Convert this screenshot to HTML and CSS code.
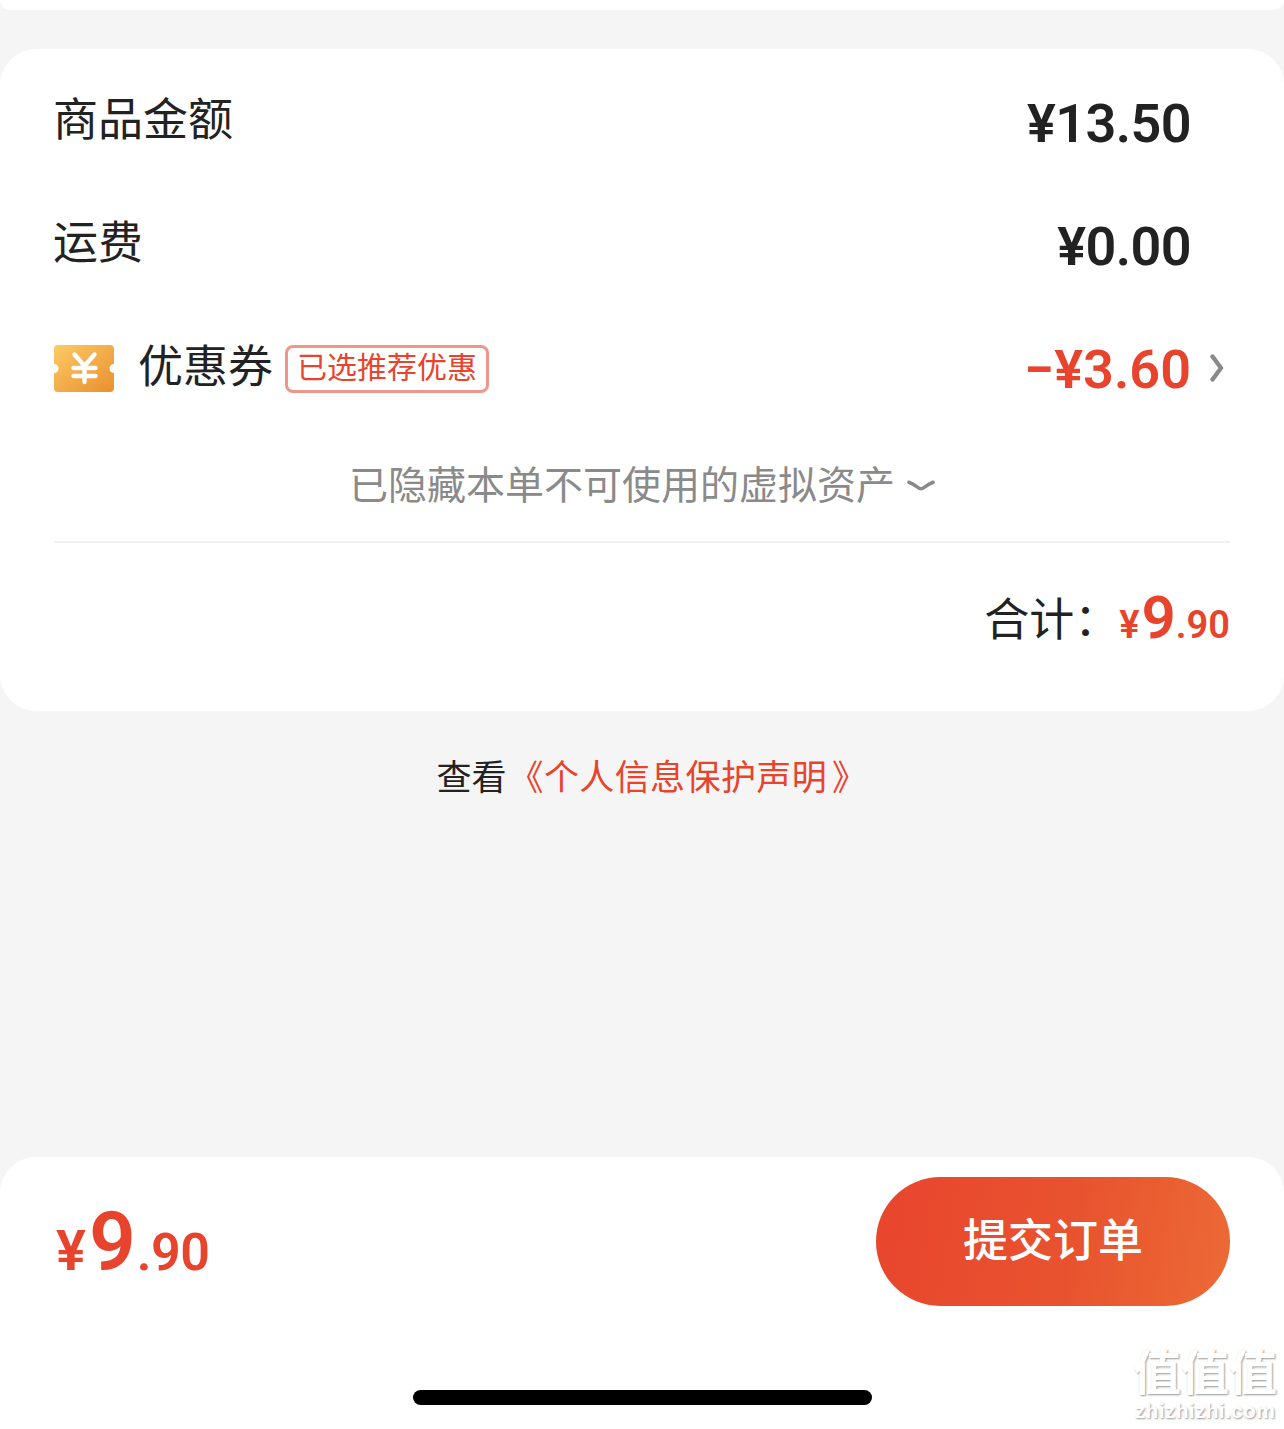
FILE: index.html
```html
<!DOCTYPE html>
<html lang="zh-CN">
<head>
<meta charset="utf-8">
<title>提交订单</title>
<link rel="stylesheet" href="styles.css">
</head>
<body>
<div class="page">
  <div class="top-card"></div>
  <section class="card">
    <div class="row">
      <span class="label">商品金额</span>
      <span class="amount">¥13.50</span>
    </div>
    <div class="row">
      <span class="label">运费</span>
      <span class="amount">¥0.00</span>
    </div>
    <div class="row row-coupon">
      <svg class="coupon" viewBox="0 0 60 47" aria-hidden="true">
        <defs>
          <linearGradient id="cg" x1="0" y1="0" x2="1" y2="1">
            <stop offset="0" stop-color="#fbcb65"/>
            <stop offset="1" stop-color="#ea8f2f"/>
          </linearGradient>
        </defs>
        <path fill="url(#cg)" d="M4 0H56a4 4 0 0 1 4 4V19a4.500 4.500 0 0 0 0 9V43a4 4 0 0 1-4 4H4a4 4 0 0 1-4-4V28a4.500 4.500 0 0 0 0-9V4a4 4 0 0 1 4-4Z"/>
        <path fill="none" stroke="#fff" stroke-width="4.400" stroke-linecap="round" d="M20.500 9.500 30.500 21 40.500 9.500M19.500 23H41.500M19.500 31H41.500M30.500 21V37"/>
      </svg>
      <span class="label coupon-label">优惠券</span>
      <span class="tag">已选推荐优惠</span>
      <span class="amount discount">−¥3.60</span>
      <svg class="chevron" viewBox="0 0 14 28" aria-hidden="true"><path d="M2.500 2.500 11 14 2.500 25.500" fill="none" stroke="#8a8a8a" stroke-width="4.400" stroke-linecap="round" stroke-linejoin="round"/></svg>
    </div>
    <div class="hidden-note">
      <span>已隐藏本单不可使用的虚拟资产</span>
      <svg class="caret" viewBox="0 0 30 14" aria-hidden="true"><path d="M2 3C10 6 12 10 15 10S20 6 28 3" fill="none" stroke="#8a8a8a" stroke-width="3.800" stroke-linecap="round" stroke-linejoin="round"/></svg>
    </div>
    <div class="total">
      <span class="total-label">合计：</span>
      <span class="price price-small"><span class="cur">¥</span><span class="int">9</span><span class="dec">.90</span></span>
    </div>
  </section>
  <p class="privacy">查看<span class="link">《个人信息保护声明<span class="close-quote">》</span></span></p>
  <footer class="bar">
    <div class="bar-main">
      <span class="price price-large"><span class="cur">¥</span><span class="int">9</span><span class="dec">.90</span></span>
      <button class="submit">提交订单</button>
    </div>
    <div class="home-indicator"></div>
  </footer>
  <div class="watermark">
    <div class="wm-mark">值值值</div>
    <div class="wm-url">zhizhizhi.com</div>
  </div>
</div>
</body>
</html>
```
FILE: styles.css
```css
* { box-sizing: border-box; }
html, body { margin: 0; padding: 0; }
body {
  font-family: "Noto Sans CJK SC", "Noto Sans", sans-serif;
  color: #222;
  background: #f5f5f5;
  text-spacing-trim: space-all;
}
.page {
  position: relative;
  width: 1284px;
  height: 1429px;
  display: flex;
  flex-direction: column;
  overflow: hidden;
  background: #f5f5f5;
}
.top-card {
  height: 10px;
  flex: none;
  background: #fff;
  border-radius: 0 0 24px 24px;
}
.card {
  margin-top: 39px;
  height: 662px;
  flex: none;
  background: #fff;
  border-radius: 36px;
  padding: 10px 54px 0;
  display: flex;
  flex-direction: column;
}
.row {
  height: 123px;
  flex: none;
  display: flex;
  align-items: center;
}
.row-coupon { padding-top: 4px; }
.label {
  font-size: 45px;
  line-height: 60px;
  color: #222;
  margin-left: -1px;
  margin-bottom: 8px;
}
.amount {
  margin-left: auto;
  margin-right: 39px;
  margin-top: 6px;
  font-family: Roboto, sans-serif;
  font-weight: 600;
  font-size: 54px;
  line-height: 60px;
  letter-spacing: -0.6px;
  color: #222;
}
.discount { color: #e8432c; margin-right: 19px; margin-top: 2px; letter-spacing: 0; }
.coupon { width: 60px; height: 47px; flex: none; }
.coupon-label { margin-left: 24px; margin-bottom: 10px; }
.tag {
  margin-left: 12px;
  width: 204px;
  height: 48px;
  border: 3px solid #f0958a;
  border-radius: 8px;
  padding-bottom: 8px;
  color: #e8432c;
  font-size: 30px;
  line-height: 34px;
  text-align: center;
  white-space: nowrap;
}
.chevron { width: 14px; height: 28px; flex: none; margin-right: 6px; margin-bottom: 2px; }
.hidden-note {
  height: 115px;
  flex: none;
  display: flex;
  justify-content: center;
  align-items: center;
  gap: 12px;
  padding: 0 0 6px;
  color: #8a8a8a;
  font-size: 39px;
  border-bottom: 2px solid #f0f0f0;
}
.caret { width: 28px; height: 14px; flex: none; margin-top: 8px; }
.total {
  flex: 1;
  display: flex;
  justify-content: flex-end;
  align-items: flex-start;
  padding-top: 44px;
}
.total-label {
  font-size: 45px;
  line-height: 62px;
  color: #222;
  margin-top: -1px;
}
.price {
  font-family: Roboto, sans-serif;
  font-weight: 600;
  color: #e8432c;
  white-space: nowrap;
}
.price-small { font-size: 38px; line-height: 62px; }
.price-small .int { font-size: 60px; margin-left: 2px; }
.price-large { font-size: 52px; line-height: 90px; margin-top: 12px; margin-left: 2px; }
.price-large .cur { font-size: 56px; }
.price-large .int { font-size: 82px; margin-left: 3px; }
.price-large .dec { margin-left: 1px; letter-spacing: -0.5px; }
.privacy {
  margin: 39px 0 0;
  text-align: center;
  font-size: 35px;
  line-height: 50px;
  color: #222;
  padding-left: 20px;
}
.link { color: #e8432c; margin-left: 2px; letter-spacing: 0.4px; }
.close-quote { margin-left: 5px; }
.bar {
  margin-top: auto;
  height: 272px;
  flex: none;
  background: #fff;
  border-radius: 36px 36px 0 0;
  display: flex;
  flex-direction: column;
  padding: 20px 54px 0;
}
.bar-main {
  display: flex;
  justify-content: space-between;
  align-items: center;
  height: 129px;
  flex: none;
}
.submit {
  width: 354px;
  height: 129px;
  border: 0;
  border-radius: 65px;
  background: linear-gradient(100deg, #e8452d 0%, #e8532f 55%, #ec6a35 100%);
  color: #fff;
  font-family: inherit;
  font-weight: 500;
  font-size: 45px;
  padding: 0 0 8px;
}
.home-indicator {
  width: 459px;
  height: 15px;
  border-radius: 8px;
  background: #000;
  margin: 84px 0 0 359px;
  flex: none;
}
.watermark {
  position: absolute;
  right: 6px;
  bottom: 8px;
  width: 146px;
  color: #fff;
  text-align: center;
  text-shadow: 1px 1px 2px #999;
}
.wm-mark {
  font-size: 48px;
  font-weight: 700;
  line-height: 54px;
  margin-bottom: 5px;
  white-space: nowrap;
}
.wm-url {
  font-family: "Liberation Sans", sans-serif;
  font-weight: 700;
  font-size: 21px;
  line-height: 20px;
  letter-spacing: 0.3px;
  white-space: nowrap;
}
```
